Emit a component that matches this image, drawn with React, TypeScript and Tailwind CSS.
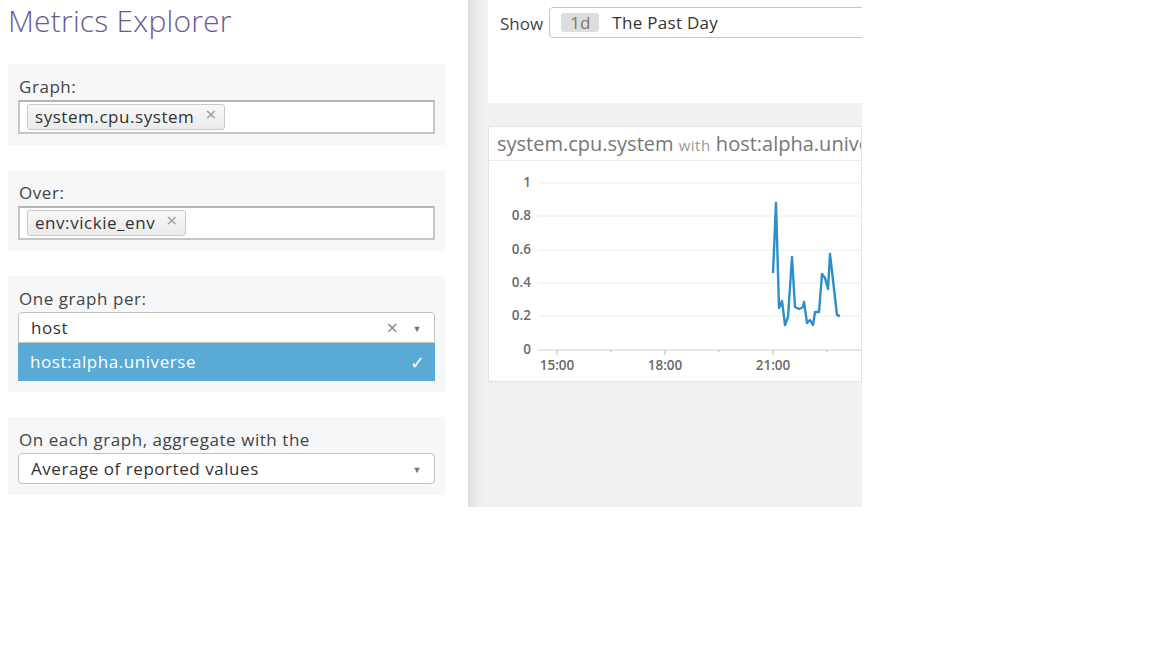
import React from 'react';

const points: [number, number][] = [
  [772, 273], [775, 203], [778, 308], [781, 301], [784, 325], [787, 317], [791, 257],
  [794, 307], [798, 309], [802, 307], [803, 302], [806, 323], [809, 320], [812, 325],
  [814, 312], [818, 312], [821, 274], [824, 278], [827, 289], [829, 254], [836, 315], [839, 316],
];

const yTicks = [
  { label: '1', y: 183 },
  { label: '0.8', y: 216 },
  { label: '0.6', y: 250 },
  { label: '0.4', y: 283 },
  { label: '0.2', y: 316 },
  { label: '0', y: 350 },
];

const xTicks = [
  { label: '15:00', x: 556 },
  { label: '18:00', x: 664 },
  { label: '21:00', x: 772 },
];

const Tag: React.FC<{ text: string }> = ({ text }) => (
  <div className="flex items-center h-[26px] mt-[2px] ml-[7px] pl-[7px] pr-[7px] rounded-[3px] border border-[#c9c9c9] bg-gradient-to-b from-[#f7f7f7] to-[#ebebeb] text-[#333]">
    <span>{text}</span>
    <span className="ml-[11px] text-[#999] text-[19px] leading-none -mt-[5px]">×</span>
  </div>
);

const Caret = () => <span className="text-[#777] text-[9px] leading-none mt-[2px]">▼</span>;

const Section: React.FC<{ label: string; children: React.ReactNode }> = ({ label, children }) => (
  <div className="bg-[#f6f7f9] w-[437px] pl-[10px] pr-[10px] pt-[12px] pb-[11px]">
    <div className="pl-[1px] leading-[22px] mb-[2px] text-[#444]">{label}</div>
    {children}
  </div>
);

const LineChart = () => (
  <svg width={374} height={220} viewBox="488 161 374 220" className="block">
    {yTicks.map((t) => (
      <g key={t.label}>
        <line
          x1={537}
          x2={862}
          y1={t.y}
          y2={t.y}
          stroke={t.label === '0' ? '#cfcfcf' : '#ececec'}
          strokeWidth={1}
        />
        <text x={530} y={t.y + 4} textAnchor="end" fontSize={13.5} fontWeight={600} fill="#6a6a6a" fontFamily="'Open Sans', sans-serif">
          {t.label}
        </text>
      </g>
    ))}
    {[556, 610, 664, 718, 772, 826].map((x, i) => (
      <line key={x} x1={x} x2={x} y1={350} y2={i % 2 === 0 ? 355 : 352} stroke="#bbb" strokeWidth={1} />
    ))}
    {xTicks.map((t) => (
      <text key={t.label} x={t.x} y={370} textAnchor="middle" fontSize={13.5} fontWeight={600} fill="#6a6a6a" fontFamily="'Open Sans', sans-serif">
        {t.label}
      </text>
    ))}
    <polyline
      points={points.map((p) => p.join(',')).join(' ')}
      fill="none"
      stroke="#2d8fc8"
      strokeWidth={2.4}
      strokeLinejoin="round"
    />
  </svg>
);

export default function App() {
  return (
    <div className="w-[1152px] h-[648px] bg-white font-['Open_Sans',sans-serif] text-[17px]">
      <div className="flex w-[862px] h-[507px]">
        {/* Left: query builder */}
        <div className="w-[468px] pl-[8px]">
          <h1 className="text-[30px] font-light leading-[42px] text-[#6a5a92] tracking-[0.2px]">Metrics Explorer</h1>

          <div className="mt-[22px] flex flex-col gap-[25px] tracking-[0.55px]">
            <Section label="Graph:">
              <div className="h-[34px] border-2 border-[#c6c6c6] border-t-[#b5b5b5] bg-white flex items-start">
                <Tag text="system.cpu.system" />
              </div>
            </Section>

            <Section label="Over:">
              <div className="h-[34px] border-2 border-[#c6c6c6] border-t-[#b5b5b5] bg-white flex items-start">
                <Tag text="env:vickie_env" />
              </div>
            </Section>

            <Section label="One graph per:">
              <div className="mt-[1px] h-[31px] rounded-t-[4px] border border-[#c2c2c2] bg-white flex items-center pl-[12px] pr-[12px]">
                <span className="flex-1 text-[#333]">host</span>
                <span className="text-[#888] text-[20px] leading-none mr-[14px]">×</span>
                <Caret />
              </div>
              <div className="h-[38px] bg-[#5aaad6] flex items-center pl-[12px] pr-[9px] text-white">
                <span className="flex-1">host:alpha.universe</span>
                <span className="text-[18px]">✓</span>
              </div>
            </Section>

            <Section label="On each graph, aggregate with the">
              <div className="h-[31px] rounded-[4px] border border-[#c2c2c2] bg-white flex items-center pl-[12px] pr-[12px]">
                <span className="flex-1 text-[#333]">Average of reported values</span>
                <Caret />
              </div>
            </Section>
          </div>
        </div>

        {/* Right: graph area */}
        <div className="w-[394px] h-[507px] bg-[#f0f1f3] flex overflow-hidden">
          <div className="w-[20px] shrink-0 bg-gradient-to-r from-[#dcdddf] via-[#eceef0] to-[#f0f1f3]" />
          <div className="w-[374px] shrink-0">
            <div className="h-[103px] bg-white pt-[7px] pl-[12px] flex items-start">
              <span className="mt-[4px] text-[#444]">Show</span>
              <div className="ml-[6px] w-[340px] shrink-0 h-[31px] rounded-[4px] border border-[#c6c6c6] flex items-center pl-[11px]">
                <span className="h-[19px] px-[9px] rounded-[3px] bg-[#dddddd] text-[#777] leading-[19px]">1d</span>
                <span className="ml-[13px] text-[#333] tracking-[0.3px]">The Past Day</span>
              </div>
            </div>

            <div className="mt-[23px] h-[256px] bg-white border border-[#e2e3e5]">
              <div className="h-[34px] border-b border-[#ececec] pl-[8px] whitespace-nowrap overflow-hidden text-[#777] text-[20px] leading-[34px]">
                system.cpu.system <span className="text-[15px] text-[#999] tracking-[0.5px]">with</span> host:alpha.universe
              </div>
              <LineChart />
            </div>
          </div>
        </div>
      </div>
    </div>
  );
}
